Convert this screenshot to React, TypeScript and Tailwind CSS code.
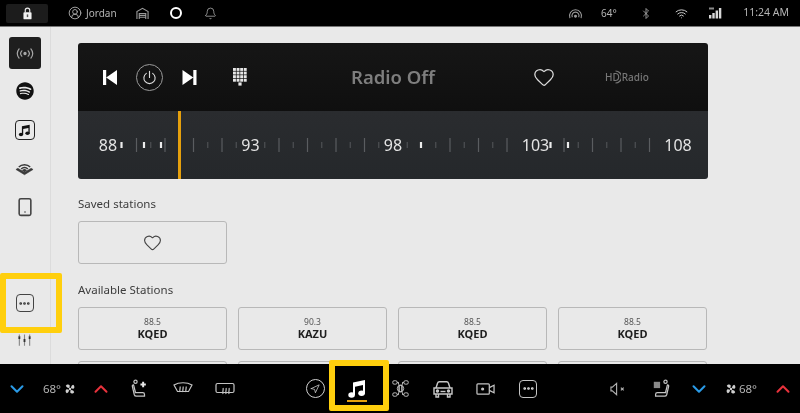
import type { ReactNode } from 'react';
import { Bell, Bluetooth, ChevronDown, ChevronUp, CircleUserRound, Ellipsis, Heart, Navigation, Smartphone, Wifi } from 'lucide-react';
import { FaSpotify } from 'react-icons/fa';

const font = "font-['Noto_Sans',sans-serif]";

// tick positions on the FM scale, 14.25px per step starting at the 88 label
const shortTicks = [3, 7, 9, 11, 13, 15, 17, 19, 21, 23, 25, 27, 33, 35, 37];
const longTicks = [2, 4, 6, 8, 12, 14, 16, 18, 24, 26, 28, 32, 34, 36, 38];
const brightTicks = [43.5, 66, 83, 343, 472.5, 490];
const labels = ['88', '93', '98', '103', '108'];

const stations = [
  { freq: '88.5', name: 'KQED' },
  { freq: '90.3', name: 'KAZU' },
  { freq: '88.5', name: 'KQED' },
  { freq: '88.5', name: 'KQED' },
];

function FanIcon({ className = 'w-[14px] h-[14px]' }: { className?: string }) {
  return (
    <svg viewBox="0 0 16 16" className={className} fill="#d0d0d0">
      <circle cx="8" cy="8" r="1.6" />
      <path d="M7 6.6C4.5 6.8 3.2 5.6 2.4 3.8 3.4 2 6.4 1.6 7.4 3c.5.8.2 2.2-.4 3.6z" />
      <path d="M9.4 7c-.2-2.5 1-3.8 2.8-4.6 1.8 1 2.2 4 .8 5-.8.5-2.2.2-3.6-.4z" />
      <path d="M9 9.4c2.5-.2 3.8 1 4.6 2.8-1 1.8-4 2.2-5 .8-.5-.8-.2-2.2.4-3.6z" />
      <path d="M6.6 9c.2 2.5-1 3.8-2.8 4.6-1.8-1-2.2-4-.8-5 .8-.5 2.2-.2 3.6.4z" />
    </svg>
  );
}

function SeatIcon({ plus }: { plus?: boolean }) {
  return (
    <svg viewBox="0 0 20 22" className="w-[18px] h-[20px]" fill="none" stroke="#c4c4c4" strokeWidth="1.4">
      <circle cx={plus ? 5 : 15} cy="3" r="1.8" />
      {plus ? (
        <>
          <path d="M3 7l2 8h8c1 0 2 1 2 2v2H6c-1 0-2-.6-2.3-1.6L1.5 8c-.3-1.4 1.2-2.2 1.5-1z" />
          <path d="M13.5 3v6M10.5 6h6" stroke="#e8e8e8" strokeWidth="2.2" />
        </>
      ) : (
        <>
          <path d="M17 7l-2 8H6c-1 0-2 1-2 2v2h10c1 0 2-.6 2.3-1.6L18.5 8c.3-1.4-1.2-2.2-1.5-1z" />
          <rect x="2" y="3" width="7" height="7" fill="#8a8a8a" stroke="none" />
        </>
      )}
    </svg>
  );
}

function MusicIcon({ className }: { className: string }) {
  return (
    <svg viewBox="0 0 20 20" className={className} fill="currentColor">
      <path d="M6 3.5L18 1v13.5h-2V6L8 7.7V16H6z" />
      <ellipse cx="4.6" cy="16" rx="3.3" ry="2.7" />
      <ellipse cx="14.6" cy="14.3" rx="3.3" ry="2.7" />
    </svg>
  );
}

function MoreBox({ className }: { className: string }) {
  return (
    <div className={`flex items-center justify-center rounded-[4px] border-[1.5px] ${className}`}>
      <Ellipsis className="w-[13px] h-[13px]" strokeWidth={3} />
    </div>
  );
}

function Slot({ width, children }: { width: string; children?: ReactNode }) {
  return <div className={`flex items-center justify-center shrink-0 ${width}`}>{children}</div>;
}

function TopBar() {
  return (
    <div className="h-[27px] shrink-0 bg-black border-b border-[#777] flex items-center text-[#b4b4b4] text-[10px]">
      <div className="ml-[6px] w-[42px] h-[19px] bg-[#1c1c1c] rounded-[2px] flex items-center justify-center">
        <svg viewBox="0 0 10 14" className="w-[9px] h-[13px]">
          <path d="M2.5 6V3.5a2.5 2.5 0 0 1 5 0V6" fill="none" stroke="#e8e8e8" strokeWidth="1.3" />
          <rect x="0.5" y="5.5" width="9" height="8" rx="1" fill="#f2f2f2" />
          <rect x="4.2" y="8" width="1.6" height="3" fill="#555" />
        </svg>
      </div>
      <CircleUserRound className="ml-[20px] w-[14px] h-[14px]" strokeWidth={1.5} />
      <span className="ml-[4px] w-[32px]">Jordan</span>
      <svg viewBox="0 0 14 14" className="ml-[18px] w-[13px] h-[13px]" fill="none" stroke="#9a9a9a" strokeWidth="1.2">
        <path d="M1 13V5l6-3.5L13 5v8M3.5 13V7h7v6M3.5 9h7M3.5 11h7" />
      </svg>
      <div className="ml-[21px] w-[12px] h-[12px] rounded-full border-[2px] border-white" />
      <Bell className="ml-[22px] w-[13px] h-[13px]" strokeWidth={1.4} />
      <div className="ml-auto flex items-center">
        <svg viewBox="0 0 16 14" className="w-[15px] h-[13px]" fill="none" stroke="#9a9a9a" strokeWidth="1.2">
          <path d="M2 12A6.5 6.5 0 1 1 14 12M4.6 11A3.8 3.8 0 1 1 11.4 11" />
          <circle cx="8" cy="10" r="1" fill="#9a9a9a" />
        </svg>
        <span className="ml-[18px] w-[18px]">64°</span>
        <Bluetooth className="ml-[21px] w-[12px] h-[13px]" strokeWidth={1.6} />
        <Wifi className="ml-[22px] w-[15px] h-[13px] text-[#d0d0d0]" strokeWidth={1.8} />
        <svg viewBox="0 0 13 12" className="ml-[20px] w-[13px] h-[12px]" fill="#d8d8d8">
          <rect x="0" y="8" width="2.4" height="3.5" />
          <rect x="3.3" y="6" width="2.4" height="5.5" />
          <rect x="6.6" y="3.5" width="2.4" height="8" />
          <rect x="9.9" y="1" width="2.4" height="10.5" />
          <rect x="0" y="0.5" width="5" height="2" fill="#8a8a8a" />
        </svg>
        <span className="ml-[21px] mr-[11px] w-[46px] text-right text-[10.5px]">11:24 AM</span>
      </div>
    </div>
  );
}

function Sidebar() {
  return (
    <div className="w-[51px] shrink-0 border-r border-[#dcdcdc] flex flex-col items-center pt-[10px] pr-px text-[#3c3c3c]">
      <div className="w-[32px] h-[32px] rounded-[3px] bg-[#1e1e1e] flex items-center justify-center">
        <svg viewBox="0 0 22 14" className="w-[20px] h-[13px]" fill="none" stroke="#a8a8a8" strokeWidth="1.3" strokeLinecap="round">
          <circle cx="11" cy="7" r="1.2" fill="#a8a8a8" />
          <path d="M7.5 4a4.5 4.5 0 0 0 0 6M14.5 4a4.5 4.5 0 0 1 0 6M4.5 2a8 8 0 0 0 0 10M17.5 2a8 8 0 0 1 0 10" />
        </svg>
      </div>
      <FaSpotify className="mt-[13px] w-[18px] h-[18px] text-[#111]" />
      <div className="mt-[20px] w-[20px] h-[20px] rounded-[4px] border-[1.5px] border-[#222] flex items-center justify-center text-[#111]">
        <MusicIcon className="w-[13px] h-[13px]" />
      </div>
      <svg viewBox="0 0 20 14" className="mt-[22px] w-[19px] h-[14px]" fill="none" stroke="#3a3a3a" strokeWidth="1.5">
        <path d="M1 7.5l9 5.5 9-5.5-2-1.2-7 4.2-7-4.2z" fill="#3a3a3a" strokeWidth="0.6" />
        <path d="M4 5C7 1.8 13 1.8 16 5M6.5 7C8.5 4.8 11.5 4.8 13.5 7" />
        <path d="M8.5 8.3c1-.8 2-.8 3 0L10 9.5z" fill="#3a3a3a" />
      </svg>
      <Smartphone className="mt-[21px] w-[20px] h-[20px] text-[#444]" strokeWidth={1.9} />
      <MoreBox className="mt-[77px] w-[18px] h-[18px] border-[#444] text-[#333]" />
      <svg viewBox="0 0 16 14" className="mt-[21px] w-[15px] h-[14px]" fill="none" stroke="#888" strokeWidth="1.2">
        <path d="M2.5 1v2M2.5 6v7M8 1v5M8 9v4M13.5 1v2M13.5 6v7" />
        <path d="M2.5 3v3M8 6v3M13.5 3v3" stroke="#333" strokeWidth="2" />
      </svg>
    </div>
  );
}

function RadioPanel() {
  const x = (k: number) => 30 + k * 14.25;
  return (
    <div className="w-[630px] h-[136px] shrink-0 rounded-[3px] overflow-hidden flex flex-col">
      <div className="h-[68px] bg-gradient-to-b from-[#161616] to-[#0f0f0f] flex items-center text-white">
        <svg viewBox="0 0 14 15" className="ml-[25px] w-[14px] h-[15px]" fill="white">
          <path d="M0 0h3.2v15H0zM14 0v15L3.2 7.5z" />
        </svg>
        <div className="ml-[19px] w-[27px] h-[27px] rounded-full border border-[#9a9a9a] flex items-center justify-center">
          <svg viewBox="0 0 16 16" className="w-[15px] h-[15px]" fill="none" stroke="#dcdcdc" strokeWidth="1.2" strokeLinecap="round">
            <path d="M8 1.5v6.5M4.6 3.6a6 6 0 1 0 6.8 0" />
          </svg>
        </div>
        <svg viewBox="0 0 14 15" className="ml-[19px] w-[15px] h-[15px]" fill="white">
          <path d="M14 0h-3.2v15H14zM0 0v15l10.8-7.5z" />
        </svg>
        <svg viewBox="0 0 14 18" className="ml-[36px] w-[14px] h-[18px]" fill="#e6e6e6">
          {[0, 1, 2, 3].flatMap((row) =>
            [0, 1, 2, 3].map((col) => <rect key={`${row}-${col}`} x={col * 3.6} y={row * 3.6} width="2.9" height="2.9" />),
          )}
          <rect x="5.4" y="14.4" width="3.2" height="3.2" />
        </svg>
        <div className="ml-[104px] w-[84px] flex justify-center text-[18.5px] leading-none font-semibold text-[#7e7e7e] whitespace-nowrap">Radio Off</div>
        <Heart className="ml-[98px] w-[22px] h-[22px] text-[#d8d8d8]" strokeWidth={1.4} />
        <div className="ml-[50px] flex items-center text-[10px] leading-none font-medium text-[#777]">
          <span>HD</span>
          <svg viewBox="0 0 6 14" className="w-[6px] h-[14px] -ml-[5px]" fill="none" stroke="#777" strokeWidth="1.2">
            <path d="M0.5 1a6 6 0 0 1 0 12" />
          </svg>
          <span className="ml-[1px]">Radio</span>
        </div>
      </div>
      <div className="relative flex-1 bg-gradient-to-b from-[#2a2c2f] to-[#25282b] flex items-center justify-between px-[30px] text-[16px] text-[#e4e4e4]">
        <svg className="absolute inset-0" width="630" height="68" fill="none">
          {shortTicks.map((k) => <path key={k} d={`M${x(k)} 31v6`} stroke="#4e5154" strokeWidth="1.2" />)}
          {longTicks.map((k) => <path key={k} d={`M${x(k)} 27v14`} stroke="#5a5d60" strokeWidth="1.2" />)}
          {brightTicks.map((px) => <path key={px} d={`M${px} 31v6`} stroke="#ececec" strokeWidth="2.2" />)}
        </svg>
        {labels.map((label) => (
          <div key={label} className="relative w-0 flex justify-center">
            <span>{label}</span>
          </div>
        ))}
        {/* tuner needle */}
        <div className="absolute left-[100px] top-0 bottom-0 w-[2.5px] bg-[#e5a00d]" />
      </div>
    </div>
  );
}

function StationButton({ freq, name }: { freq?: string; name?: string }) {
  return (
    <div className="h-[43px] rounded-[3px] border-[1.5px] border-[#b8b8b8] flex flex-col items-center justify-center leading-none">
      <span className="text-[8.5px] text-[#555]">{freq}</span>
      <span className="mt-[1px] text-[11px] font-bold text-[#1e1e1e]">{name}</span>
    </div>
  );
}

function BottomBar() {
  return (
    <div className="h-[49px] shrink-0 bg-black flex items-center text-[#b4b4b4]">
      <Slot width="w-[34px]"><ChevronDown className="w-[22px] h-[22px] text-[#2a9be8]" strokeWidth={2.2} /></Slot>
      <Slot width="w-[51px]">
        <span className="text-[11.5px]">68°</span>
        <FanIcon className="ml-[3px] w-[12px] h-[12px]" />
      </Slot>
      <Slot width="w-[32px]"><ChevronUp className="w-[22px] h-[22px] text-[#e8323c]" strokeWidth={2.2} /></Slot>
      <Slot width="w-[46px]"><SeatIcon plus /></Slot>
      <Slot width="w-[40px]">
        <svg viewBox="0 0 20 14" className="w-[20px] h-[15px]" fill="none" stroke="#c4c4c4" strokeWidth="1.2">
          <path d="M1 3.5C6 .5 14 .5 19 3.5L15.5 10h-11z" />
          <path d="M7 5c.8 1.5-.8 3 0 5.5M10 5c.8 1.5-.8 3 0 5.5M13 5c.8 1.5-.8 3 0 5.5" />
        </svg>
      </Slot>
      <Slot width="w-[44px]">
        <svg viewBox="0 0 20 14" className="w-[20px] h-[14px]" fill="none" stroke="#c4c4c4" strokeWidth="1.2">
          <rect x="1" y="1.5" width="18" height="9" rx="1.5" />
          <path d="M8 6c.8 1.5-.8 3 0 6M11 6c.8 1.5-.8 3 0 6M14 6c.8 1.5-.8 3 0 6" />
        </svg>
      </Slot>
      <div className="w-[45px] shrink-0" />
      <Slot width="w-[46px]">
        <div className="w-[19px] h-[19px] rounded-full border border-[#d0d0d0] flex items-center justify-center">
          <Navigation className="w-[10px] h-[10px] text-[#d8d8d8]" strokeWidth={1.8} />
        </div>
      </Slot>
      <Slot width="w-[38px]"><MusicIcon className="w-[20px] h-[20px] text-white" /></Slot>
      <Slot width="w-[48px]">
        <svg viewBox="0 0 18 18" className="w-[17px] h-[17px]" fill="none" stroke="#c4c4c4" strokeWidth="1">
          <rect x="0.8" y="0.8" width="4.6" height="3.6" rx="1.4" />
          <rect x="12.6" y="0.8" width="4.6" height="3.6" rx="1.4" />
          <rect x="0.8" y="13.6" width="4.6" height="3.6" rx="1.4" />
          <rect x="12.6" y="13.6" width="4.6" height="3.6" rx="1.4" />
          <path d="M5.4 2.6h1.8M10.8 2.6h1.8M5.4 15.4h1.8M10.8 15.4h1.8" />
          <path d="M6.5 2.5l1 3v7l-1 3M11.5 2.5l-1 3v7l1 3" />
          <rect x="7.5" y="5.5" width="3" height="7" rx="1" />
          <circle cx="9" cy="9" r="3.4" />
        </svg>
      </Slot>
      <Slot width="w-[38px]">
        <svg viewBox="0 0 20 18" className="w-[20px] h-[18px]" fill="none" stroke="#c8c8c8" strokeWidth="1.4">
          <path d="M3 8l1.6-5c.2-.8 1-1.3 1.8-1.3h7.2c.8 0 1.6.5 1.8 1.3L17 8" />
          <path d="M1 8h18v6H1zM3 14v3h2.5v-3M14.5 14v3H17v-3" />
          <circle cx="4.5" cy="11" r="1" fill="#c8c8c8" />
          <circle cx="15.5" cy="11" r="1" fill="#c8c8c8" />
          <path d="M7.5 11.5h5" />
        </svg>
      </Slot>
      <Slot width="w-[46px]">
        <svg viewBox="0 0 20 14" className="w-[19px] h-[14px]" fill="none" stroke="#c4c4c4" strokeWidth="1.3">
          <rect x="1" y="1.5" width="13" height="11" rx="1" />
          <path d="M14 5.5l5-2.5v8l-5-2.5" />
          <circle cx="7" cy="7" r="1" fill="#c4c4c4" />
        </svg>
      </Slot>
      <Slot width="w-[40px]"><MoreBox className="w-[18px] h-[18px] border-[#c4c4c4] text-[#e8e8e8]" /></Slot>
      <div className="w-[49px] shrink-0" />
      <Slot width="w-[42px]">
        <svg viewBox="0 0 18 14" className="w-[17px] h-[14px]" fill="none" stroke="#b0b0b0" strokeWidth="1.2">
          <path d="M7 1L2.5 5H1v4h1.5L7 13zM11.5 5.5l3 3M14.5 5.5l-3 3" />
        </svg>
      </Slot>
      <Slot width="w-[44px]"><SeatIcon /></Slot>
      <Slot width="w-[32px]"><ChevronDown className="w-[22px] h-[22px] text-[#2a9be8]" strokeWidth={2.2} /></Slot>
      <Slot width="w-[52px]">
        <FanIcon className="w-[12px] h-[12px]" />
        <span className="ml-[2px] text-[11.5px]">68°</span>
      </Slot>
      <Slot width="w-[32px]"><ChevronUp className="w-[22px] h-[22px] text-[#e8323c]" strokeWidth={2.2} /></Slot>
    </div>
  );
}

export default function App() {
  return (
    <div className={`relative w-[800px] h-[413px] overflow-hidden flex flex-col bg-[#e9e9e9] blur-[0.3px] ${font}`}>
      <TopBar />
      <div className="flex flex-1 min-h-0">
        <Sidebar />
        <div className="flex-1 overflow-hidden pl-[27px] pt-[16px]">
          <RadioPanel />
          <div className="mt-[17px] text-[11.5px] leading-[16px] text-[#3c3c3c]">Saved stations</div>
          <div className="mt-[9px] w-[149px] h-[43px] rounded-[3px] border-[1.5px] border-[#b8b8b8] flex items-center justify-center">
            <Heart className="w-[19px] h-[19px] text-[#444]" strokeWidth={1.4} />
          </div>
          <div className="mt-[18px] text-[11.5px] leading-[16px] text-[#3c3c3c]">Available Stations</div>
          <div className="mt-[9px] w-[629px] grid grid-cols-4 gap-[11px]">
            {stations.map((s, i) => <StationButton key={i} freq={s.freq} name={s.name} />)}
            {stations.map((_, i) => <StationButton key={i} />)}
          </div>
        </div>
      </div>
      <BottomBar />
      {/* yellow callouts drawn over the screenshot */}
      <div className="absolute left-0 top-[273px] w-[62px] h-[60px] rounded-[2px] border-[6px] border-[#ffcf0d]" />
      <div className="absolute left-[329px] top-[360px] w-[60px] h-[51px] rounded-[2px] border-[6px] border-[#ffcf0d]" />
      <div className="absolute left-[347px] top-[400px] w-[20px] h-[2px] bg-[#e5a00d]" />
    </div>
  );
}
